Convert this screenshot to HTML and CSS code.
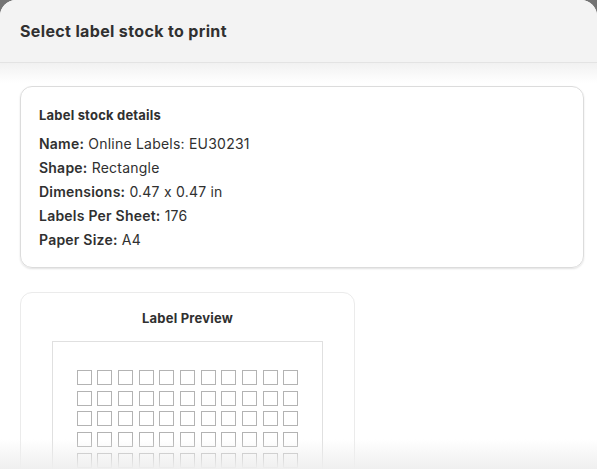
FILE: index.html
```html
<!DOCTYPE html>
<html lang="en">
<head>
  <meta charset="UTF-8">
  <meta name="viewport" content="width=device-width, initial-scale=1">
  <title>Select label stock to print</title>
  <link rel="stylesheet" href="styles.css">
</head>
<body>
  <div class="modal">
    <header class="modal-header">
      <h2>Select label stock to print</h2>
    </header>

    <main class="modal-body">
      <div class="stock-card">
        <h3>Label stock details</h3>
        <p><b>Name:</b> Online Labels: EU30231</p>
        <p><b>Shape:</b> Rectangle</p>
        <p><b>Dimensions:</b> 0.47 x 0.47 in</p>
        <p><b>Labels Per Sheet:</b> 176</p>
        <p><b>Paper Size:</b> A4</p>
      </div>

      <div class="preview-card">
        <h3>Label Preview</h3>
        <div class="sheet">
          <div class="label-grid" id="label-grid"></div>
        </div>
      </div>
    </main>

    <div class="footer-shade"></div>
  </div>

  <script>
    const grid = document.getElementById("label-grid");
    for (let i = 0; i < 176; i++) {
      const cell = document.createElement("div");
      cell.className = "label-cell";
      grid.appendChild(cell);
    }
  </script>
</body>
</html>
```

FILE: styles.css
```css
body {
  font-family: Inter, "Noto Sans", sans-serif;
  font-feature-settings: "calt" 0;
  background: #747474;
  margin: 0;
  padding: 0;
  color: #303030;
}

h2, h3, p {
  margin: 0;
}

.modal {
  position: relative;
  height: 100vh;
  background: #fff;
  border-radius: 16px 16px 0 0;
  overflow: hidden;
  display: flex;
  flex-direction: column;
}

.modal-header {
  position: relative;
  height: 62px;
  flex-shrink: 0;
  display: flex;
  align-items: center;
  padding: 0 20px;
  background: #f3f3f3;
  border-bottom: 1px solid #e3e3e3;
}

.modal-header::after {
  content: "";
  position: absolute;
  left: 0;
  right: 0;
  top: 63px;
  height: 20px;
  background: linear-gradient(#f1f1f1, rgba(255,255,255,0));
}

.modal-header h2 {
  font-size: 16px;
  font-weight: 650;
  letter-spacing: 0.35px;
  margin-top: -1px;
}

.modal-body {
  padding: 23px 13px 0 20px;
  display: flex;
  flex-direction: column;
  gap: 24px;
}

.stock-card {
  border: 1px solid #dcdcdc;
  border-radius: 12px;
  box-shadow: 0 1px 2px rgba(0,0,0,0.12);
  padding: 18px 18px 15px;
}

.stock-card h3 {
  font-size: 13px;
  font-weight: 650;
  line-height: 20px;
  letter-spacing: 0.2px;
  margin-bottom: 7px;
}

.stock-card p {
  font-size: 14px;
  line-height: 24px;
  letter-spacing: 0.22px;
}

.stock-card b {
  font-weight: 600;
}

.preview-card {
  width: 335px;
  box-sizing: border-box;
  border: 1px solid #ebebeb;
  border-radius: 12px;
  padding: 15px 31px 40px;
}

.preview-card h3 {
  font-size: 13px;
  font-weight: 650;
  line-height: 20px;
  letter-spacing: 0.2px;
  text-align: center;
  margin-bottom: 13px;
}

.sheet {
  border: 1px solid #e0e0e0;
  padding: 28px 0 30px;
  display: flex;
  justify-content: center;
}

.label-grid {
  display: grid;
  grid-template-columns: repeat(11, 15px);
  gap: 5.7px;
}

.label-cell {
  height: 15px;
  box-sizing: border-box;
  border: 1px solid #b3b3b3;
}

.footer-shade {
  position: absolute;
  left: 0;
  right: 0;
  bottom: 0;
  height: 30px;
  background: linear-gradient(rgba(255,255,255,0), #efefef);
}
```
